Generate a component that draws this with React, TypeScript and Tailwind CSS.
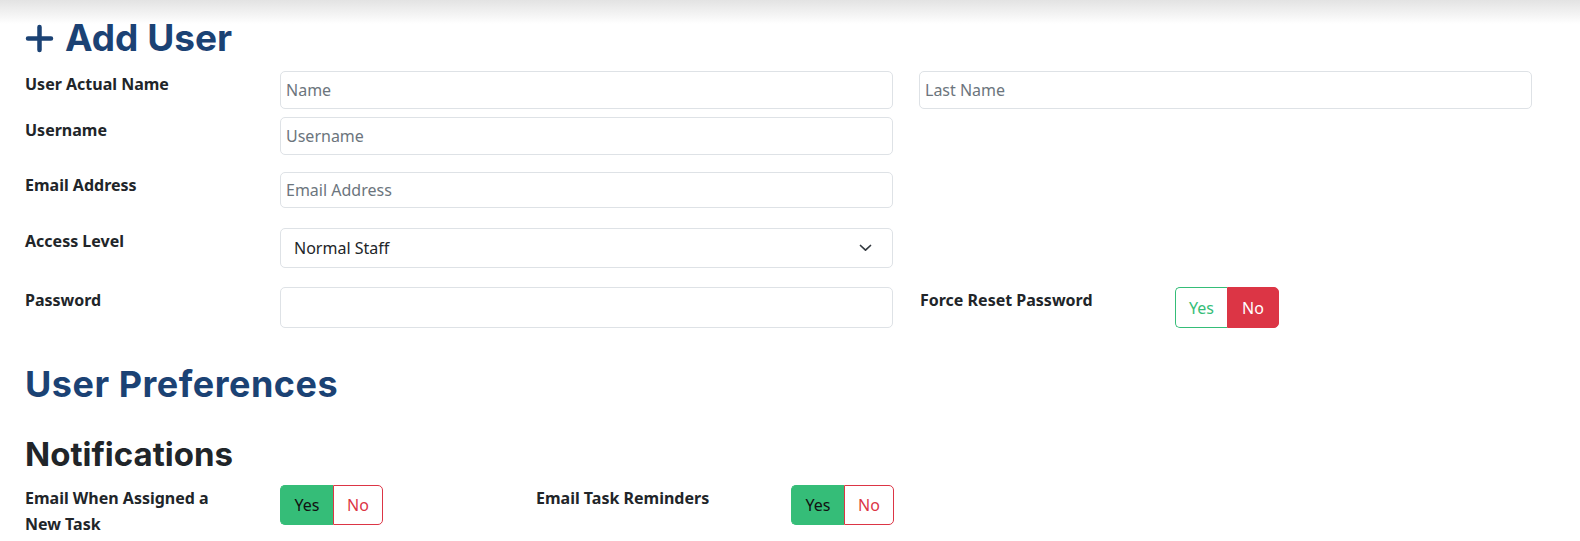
import React from "react";

const headingFont = { fontFamily: "Inter, 'Open Sans', sans-serif" };

function Toggle({ active }: { active: "yes" | "no" }) {
  if (active === "no") {
    return (
      <div className="flex h-[41px] w-[104px]">
        <button className="flex w-[52px] items-center justify-center rounded-l-[5px] border border-r-0 border-[#35bd78] bg-white text-[16px] text-[#35bd78] font-['Noto_Sans',sans-serif]">
          Yes
        </button>
        <button className="flex w-[52px] items-center justify-center rounded-r-[5px] border border-[#dc3545] bg-[#dc3545] text-[16px] text-white font-['Noto_Sans',sans-serif]">
          No
        </button>
      </div>
    );
  }
  return (
    <div className="flex h-[40px] w-[103px]">
      <button className="flex w-[53px] items-center justify-center rounded-l-[5px] border border-r-0 border-[#35bd78] bg-[#35bd78] text-[16px] text-[#111] font-['Noto_Sans',sans-serif]">
        Yes
      </button>
      <button className="flex w-[50px] items-center justify-center rounded-r-[5px] border border-[#dc3545] bg-white text-[16px] text-[#dc3545] font-['Noto_Sans',sans-serif]">
        No
      </button>
    </div>
  );
}

function Label({ children, className = "" }: { children: React.ReactNode; className?: string }) {
  return (
    <div className={"w-[255px] shrink-0 " + className}>
      <span className="block text-[16px] leading-[26px] font-bold text-[#212529] font-['Noto_Sans',sans-serif]">
        {children}
      </span>
    </div>
  );
}

function TextInput({ placeholder, h = "h-[38px]" }: { placeholder?: string; h?: string }) {
  return (
    <input
      type="text"
      placeholder={placeholder}
      className={
        "w-[613px] shrink-0 rounded-[5px] border border-[#dee2e6] bg-white px-[5px] text-[16px] text-[#212529] placeholder:text-[#6c757d] outline-none font-['Noto_Sans',sans-serif] " +
        h
      }
    />
  );
}

export default function App() {
  return (
    <div className="relative min-h-[541px] w-[1580px] overflow-hidden bg-white">
      <div className="pointer-events-none absolute inset-x-0 top-0 h-[24px] bg-gradient-to-b from-[#e3e3e3] to-white" />
      <div className="relative pl-[25px]">
        {/* Heading */}
        <div className="flex h-[71px] items-start pt-[14px]">
          <h1 className="flex items-center text-[37px] leading-[48px] font-bold text-[#1b4274]" style={headingFont}>
            <svg width="29" height="29" viewBox="0 0 29 29" className="mr-[11px]">
              <path d="M14.5 3 V26 M3 14.5 H26" stroke="#1b4274" strokeWidth="4.5" strokeLinecap="round" />
            </svg>
            Add User
          </h1>
        </div>

        {/* Row 1 */}
        <div className="flex">
          <Label>User Actual Name</Label>
          <TextInput placeholder="Name" />
          <div className="ml-[26px]">
            <TextInput placeholder="Last Name" />
          </div>
        </div>

        {/* Row 2 */}
        <div className="mt-[8px] flex">
          <Label>Username</Label>
          <TextInput placeholder="Username" />
        </div>

        {/* Row 3 */}
        <div className="mt-[17px] flex">
          <Label>Email Address</Label>
          <TextInput placeholder="Email Address" h="h-[36px]" />
        </div>

        {/* Row 4 */}
        <div className="mt-[20px] flex">
          <Label>Access Level</Label>
          <div className="relative flex h-[40px] w-[613px] shrink-0 items-center rounded-[5px] border border-[#dee2e6] bg-white pl-[13px] text-[16px] text-[#212529] font-['Noto_Sans',sans-serif]">
            Normal Staff
            <svg
              className="absolute right-[20px] top-1/2 -translate-y-1/2"
              width="13"
              height="8"
              viewBox="0 0 13 8"
            >
              <path d="M1.5 1.5 L6.5 6.2 L11.5 1.5" fill="none" stroke="#343a40" strokeWidth="1.7" strokeLinecap="round" strokeLinejoin="round" />
            </svg>
          </div>
        </div>

        {/* Row 5 */}
        <div className="mt-[19px] flex">
          <Label>Password</Label>
          <input
            type="password"
            className="h-[41px] w-[613px] shrink-0 rounded-[5px] border border-[#dee2e6] bg-white px-[5px] outline-none"
          />
          <div className="ml-[27px] flex">
            <Label>Force Reset Password</Label>
            <Toggle active="no" />
          </div>
        </div>

        {/* User Preferences */}
        <h2
          className="mt-[34px] text-[36px] leading-[44px] font-bold tracking-[0.5px] text-[#1b4274]"
          style={headingFont}
        >
          User Preferences
        </h2>
        <h3 className="mt-[26px] text-[33px] leading-[44px] font-bold text-[#212529]" style={headingFont}>
          Notifications
        </h3>

        <div className="mt-[9px] flex">
          <Label>
            <span className="block w-[205px]">Email When Assigned a New Task</span>
          </Label>
          <Toggle active="yes" />
          <div className="ml-[153px] flex">
            <Label>Email Task Reminders</Label>
            <Toggle active="yes" />
          </div>
        </div>
      </div>
    </div>
  );
}
